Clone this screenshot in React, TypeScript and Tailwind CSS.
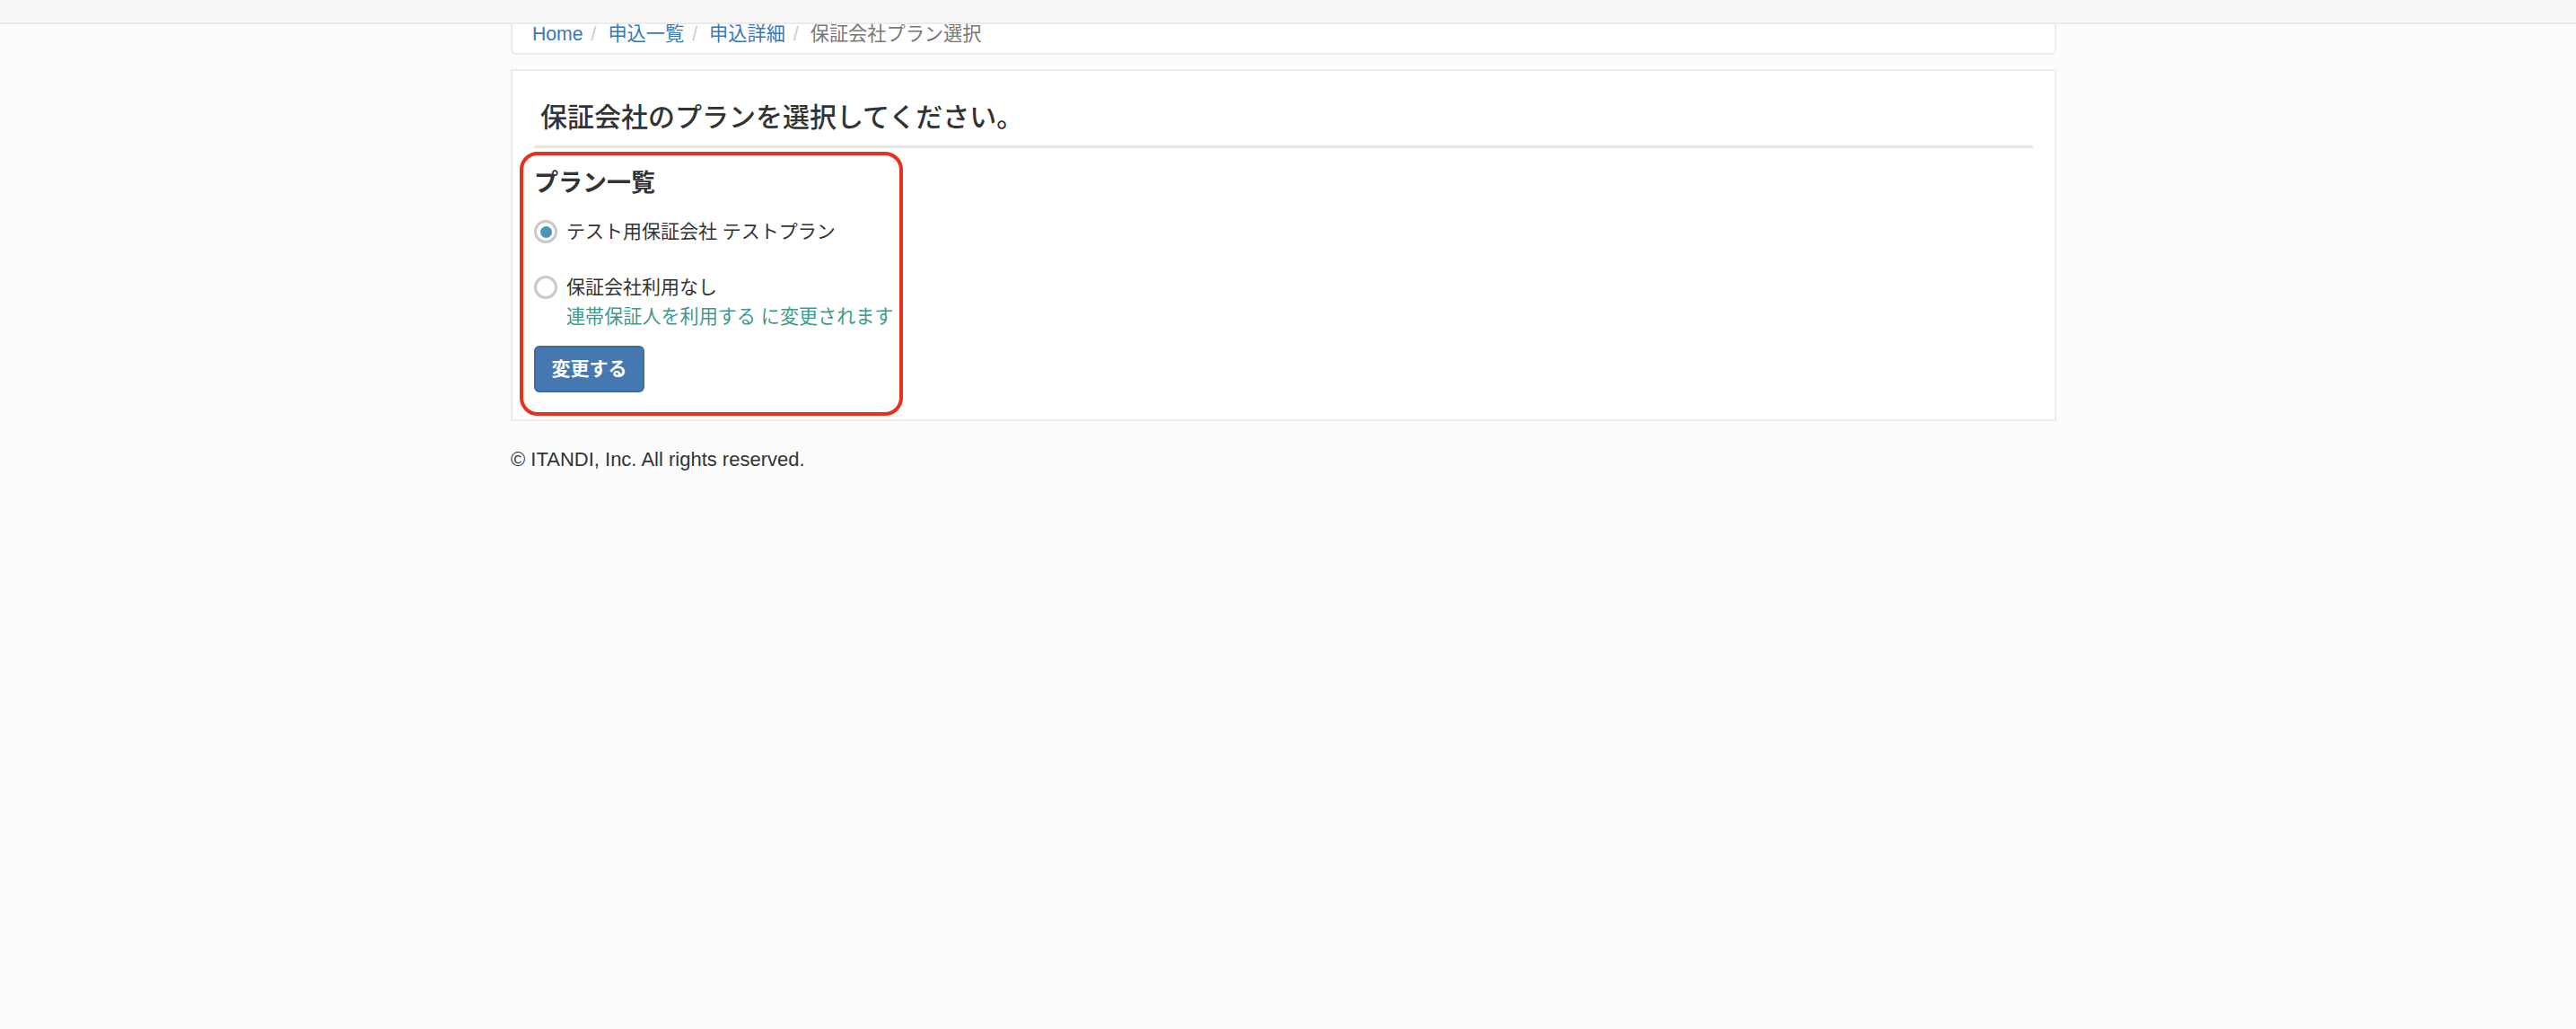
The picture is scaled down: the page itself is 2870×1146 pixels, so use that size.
import React from 'react';

const font = { fontFamily: '"Liberation Sans", "Noto Sans CJK JP", sans-serif' };

const Radio = ({ checked }: { checked: boolean }) => (
    <span className="flex h-[26px] w-[26px] shrink-0 items-center justify-center rounded-full border-[3px] border-[#c9c9c9] bg-white">
        {checked && <span className="h-[13px] w-[13px] rounded-full bg-[#4a97b3]" />}
    </span>
);

export default function App() {
    return (
        <div className="min-h-[1146px] bg-[#fcfcfc] text-[#333]" style={font}>
            <div className="h-[27px] border-b-2 border-[#ebebeb] bg-[#f8f8f8]" />

            <div className="ml-[569px] w-[1722px]">
                {/* breadcrumb */}
                <div className="flex h-[34px] items-start rounded-b-[6px] border-2 border-t-0 border-[#ebebeb] bg-white pl-[22px] text-[21.2px] leading-[22px]">
                    <a className="text-[#3a78b8]">Home</a>
                    <span className="pl-[9px] pr-[13px] text-[#cccccc]">/</span>
                    <a className="text-[#3a78b8]">申込一覧</a>
                    <span className="pl-[9px] pr-[13px] text-[#cccccc]">/</span>
                    <a className="text-[#3a78b8]">申込詳細</a>
                    <span className="pl-[9px] pr-[13px] text-[#cccccc]">/</span>
                    <span className="text-[#777]">保証会社プラン選択</span>
                </div>

                {/* main card */}
                <div className="mt-[16px] border-2 border-[#ebebeb] bg-white px-[8px] pb-[4px]">
                    <div className="mx-[16px] border-b-[3px] border-[#e6e6e8] pb-[13px] pl-[7px] pt-[34px]">
                        <h2 className="text-[30px] font-medium leading-[36px]">保証会社のプランを選択してください。</h2>
                    </div>

                    <div className="mt-[4px] w-[427px] rounded-[20px] border-[4px] border-[#e8311d] px-[12px] pb-[22px] pt-[15px]">
                        <h3 className="text-[27px] font-bold leading-[32px]">プラン一覧</h3>

                        <label className="mt-[23px] flex h-[30px] items-center gap-[10px] text-[21px]">
                            <Radio checked />
                            <span>テスト用保証会社 テストプラン</span>
                        </label>

                        <label className="mt-[32px] flex h-[30px] items-center gap-[10px] text-[21px]">
                            <Radio checked={false} />
                            <span>保証会社利用なし</span>
                        </label>
                        <p className="ml-[36px] mt-[3px] whitespace-nowrap text-[21.1px] leading-[30px] text-[#3e9a8c]">連帯保証人を利用する に変更されます</p>

                        <button className="mt-[17px] h-[52px] w-[123px] rounded-[6px] border-2 border-[#3b6aa5] bg-[#4577b1] text-[21px] font-bold text-white">
                            変更する
                        </button>
                    </div>
                </div>

                <p className="mt-[28px] text-[22px] leading-[30px]">© ITANDI, Inc. All rights reserved.</p>
            </div>
        </div>
    );
}
